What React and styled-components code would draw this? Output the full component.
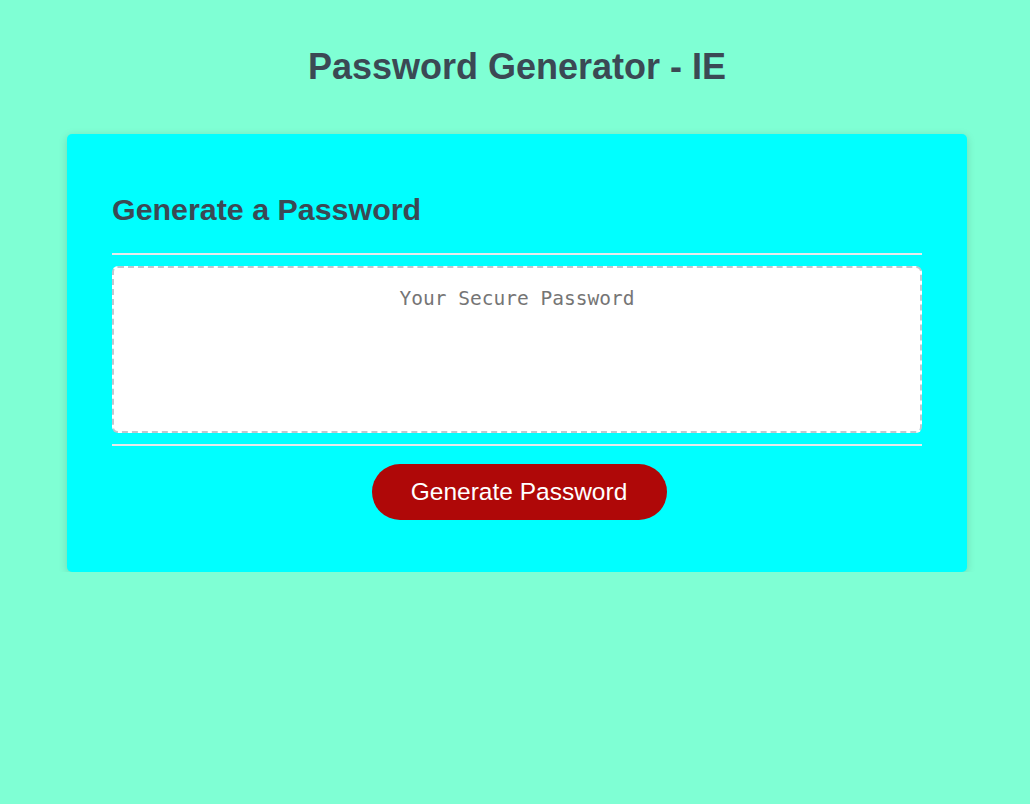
import React from 'react';
import styled, {createGlobalStyle} from 'styled-components';

const GlobalStyle = createGlobalStyle`
    * {
        box-sizing: border-box;
    }
    body {
        margin: 0;
        background-color: #7fffd4;
        font-family: "Liberation Sans", Arial, sans-serif;
    }
`

const Wrapper = styled.div`
    padding: 0 16px 0 20px;
`

const PageTitle = styled.h1`
    margin: 0;
    padding-top: 47px;
    height: 134px;
    text-align: center;
    font-size: 36px;
    line-height: 40px;
    font-weight: 700;
    color: hsl(206, 17%, 28%);
`

const Card = styled.section`
    width: 900px;
    margin: 0 auto;
    padding: 59px 45px 52px;
    background-color: #00ffff;
    border-radius: 5px;
    box-shadow: rgba(0, 0, 0, 0.15) 0px 2px 8px 0px;
    color: hsl(206, 17%, 28%);
`

const CardTitle = styled.h2`
    margin: 0;
    font-size: 30.4px;
    line-height: 32px;
    font-weight: 700;
`

const Divider = styled.div`
    height: 2px;
    background: #e7e9eb;
    margin-top: ${({top}) => top}px;
`

const PasswordBox = styled.textarea`
    display: block;
    width: 100%;
    height: 167px;
    margin: 11px 0 11px;
    padding: 19px 15px 0;
    border: 2px dashed #c0c7cf;
    border-radius: 6px;
    background: #fff;
    resize: none;
    overflow: hidden;
    text-align: center;
    font-family: "DejaVu Sans Mono", "Liberation Mono", monospace;
    font-size: 19.5px;
    outline: none;

    &::placeholder {
        color: #757575;
    }
`

const Footer = styled.div`
    display: flex;
    justify-content: center;
    padding-top: 18px;
`

const GenerateButton = styled.button`
    width: 295px;
    height: 56px;
    margin-left: 4px;
    border: none;
    border-radius: 28px;
    background-color: #af0808;
    color: #fff;
    font-family: "Liberation Sans", Arial, sans-serif;
    font-size: 24.5px;
    line-height: 24px;
    cursor: pointer;
`

const App = () => {
    return <React.Fragment>
        <GlobalStyle />
        <Wrapper>
            <PageTitle>Password Generator - IE</PageTitle>
            <Card>
                <CardTitle>Generate a Password</CardTitle>
                <Divider top={28} />
                <PasswordBox readOnly placeholder="Your Secure Password" aria-label="Generated Password" />
                <Divider top={0} />
                <Footer>
                    <GenerateButton>Generate Password</GenerateButton>
                </Footer>
            </Card>
        </Wrapper>
    </React.Fragment>
}

export default App;
